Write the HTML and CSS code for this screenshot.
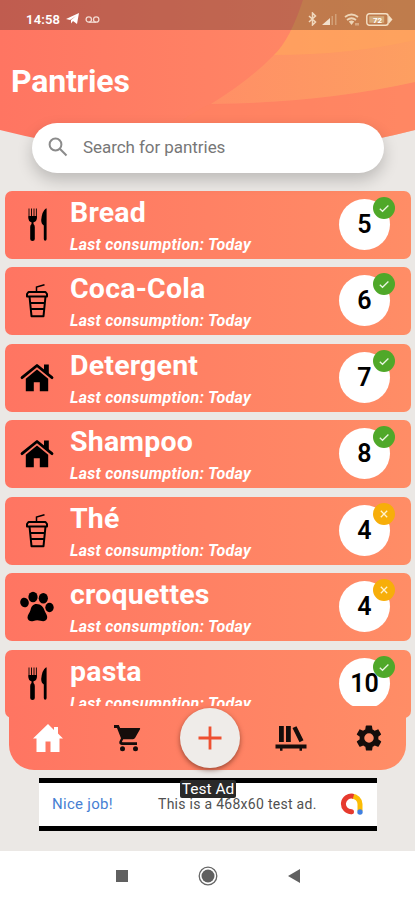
FILE: index.html
```html
<!DOCTYPE html>
<html lang="en">
<head>
    <meta charset="UTF-8">
    <meta name="viewport" content="width=device-width, initial-scale=1.0">
    <title>Pantries</title>
    <link rel="stylesheet" href="styles.css">
</head>
<body>
    <svg class="sprite" width="0" height="0">
        <symbol id="cutlery" viewBox="0 0 36 36">
            <path d="M10 1.500v10M12.500 1.500v10M15 1.500v10M17.400 1.500v10" stroke="#000" stroke-width=".9" fill="none"/>
            <path d="M9.500 9v2.500q0 3 3 3.800V17q-1.300 1-1.300 3v12q0 2 2.300 2t2.300-2V20q0-2-1.300-3v-1.700q3.300-.8 3.300-3.800V9z"/>
            <path d="M27.200 1.300Q23 4 22.200 13q0 4 2.600 5.500V32q0 1.800 1.400 1.800t1.400-1.800V2q0-.6-.4-.7z"/>
        </symbol>
        <symbol id="cup" viewBox="0 0 36 36">
            <path d="M17.500 8V4l8-2.200" stroke="#000" stroke-width="1.500" fill="none"/>
            <path d="M9.500 9h17l1.500 2v2.500H8V11z" stroke="#000" stroke-width="2" fill="none" stroke-linejoin="round"/>
            <path d="M10.500 13.500l2 19.700h12l2-19.700M11 20h15M12 26h13" stroke="#000" stroke-width="2" fill="none" stroke-linejoin="round"/>
        </symbol>
        <symbol id="house" viewBox="0 0 36 36">
            <path d="M3 17.700 18 5.500l15 12.200" stroke="#000" stroke-width="2.800" fill="none" stroke-linecap="round" stroke-linejoin="round"/>
            <path d="M25 4.500h4.800v11l-4.800-3.800zM18 9.500 6.800 18.700v12.500h8v-9h6v9h8.400V18.700z"/>
        </symbol>
        <symbol id="paw" viewBox="0 0 36 36">
            <ellipse cx="14" cy="8" rx="4.600" ry="5.200"/>
            <ellipse cx="24.300" cy="9.300" rx="4.600" ry="5.200"/>
            <ellipse cx="5.500" cy="13.500" rx="4.300" ry="4.800" transform="rotate(-15 5.500 13.500)"/>
            <ellipse cx="30.500" cy="18.500" rx="4.200" ry="4.700"/>
            <path d="M17.500 15C22 15 24.500 18 25.500 21.500C26.500 24.500 29 26.500 28 29.500C27 32.500 24 32.500 21.500 31.700C19 31 17 31 14.500 31.900C11.500 32.800 8.500 31.500 8.500 28.500C8.500 25.500 10.800 24 11.500 21C12.300 17.500 14 15 17.500 15Z"/>
        </symbol>
        <symbol id="check" viewBox="0 0 22 22">
            <circle cx="11" cy="11" r="11" fill="#4fa829"/>
            <path d="M6.800 11.700l2.700 2.600 5.900-5.800" fill="none" stroke="#e9f6e2" stroke-width="1.300"/>
        </symbol>
        <symbol id="cross" viewBox="0 0 22 22">
            <circle cx="11" cy="11" r="11" fill="#f7ae09"/>
            <path d="M7.800 7.800l6.400 6.400M14.200 7.800l-6.400 6.400" fill="none" stroke="#fff3d0" stroke-width="1.300"/>
        </symbol>
    </svg>

    <div class="phone">
        <header class="header">
            <svg class="header-bg" viewBox="0 0 415 190" preserveAspectRatio="none">
                <defs>
                    <linearGradient id="coral" x1="0" y1="0" x2="1" y2="0">
                        <stop offset="0" stop-color="#ff7562"/>
                        <stop offset="1" stop-color="#ff8d66"/>
                    </linearGradient>
                    <linearGradient id="wave" x1="0" y1="0" x2="1" y2="0">
                        <stop offset="0" stop-color="#ff8f66"/>
                        <stop offset="1" stop-color="#fd9f61"/>
                    </linearGradient>
                    <clipPath id="curve"><path d="M0 0H415V130Q208 183 0 130Z"/></clipPath>
                </defs>
                <g clip-path="url(#curve)">
                    <rect width="415" height="190" fill="url(#coral)"/>
                    <path d="M208 105Q320 103 415 82V190H100Q160 130 208 105Z" fill="#ff8260" opacity=".5"/>
                    <path d="M303 0Q290 40 274 55 250 80 211 104 320 103 415 82V0Z" fill="url(#wave)"/>
                    <path d="M303 0Q290 40 274 55 350 55 415 40V0Z" fill="#ffa45c" opacity=".65"/>
                </g>
            </svg>
            <div class="status-bar">
                <span class="time">14:58</span>
                <svg width="15" height="14" viewBox="0 0 15 14"><path d="M1 7 14 1l-2 11-4-3-2 2.500V8l5-4-6 4z" fill="#fff"/></svg>
                <svg class="voicemail" width="15" height="9" viewBox="0 0 15 9" fill="none" stroke="#f2d9d0" stroke-width="1.300"><circle cx="3.800" cy="4.500" r="2.700"/><circle cx="11.200" cy="4.500" r="2.700"/><path d="M3.800 7.200h7.400"/></svg>
                <div class="status-right">
                    <svg width="9" height="14" viewBox="0 0 9 14" fill="none" stroke="#f0d8bd" stroke-width="1.500"><path d="M1 4l6.500 6L4.500 13V1l3 3L1 10"/></svg>
                    <svg class="signal" width="17" height="12" viewBox="0 0 17 12"><path d="M1 12 9 5v7z" fill="#f2e0cd"/><path d="M10.500 12V3h1.500v9zM14 12V1h1.500v11z" fill="#d2a078"/></svg>
                    <svg class="wifi" width="15" height="13" viewBox="0 0 15 13" fill="none" stroke="#edd5b6" stroke-width="1.800"><path d="M1 4q6.500-5 13 0M3 7q4.500-3.500 9 0"/><path d="M4.800 8.500q2.700-2 5.400 0L7.500 12z" fill="#edd5b6" stroke="none"/><path d="M12 10v2.500M14 10v2.500" stroke-width="1"/></svg>
                    <svg width="27" height="13" viewBox="0 0 27 13"><rect x=".8" y=".8" width="21.400" height="11.400" rx="2.500" fill="none" stroke="#f4e0c5" stroke-width="1.400"/><path d="M23 2.500 26.500 6.500l-3.500 4z" fill="#f4e0c5"/><rect x="3.200" y="3.200" width="15" height="6.600" fill="#d3aa7b"/><text x="11.500" y="9.600" class="battery-text">72</text></svg>
                </div>
            </div>
            <h1>Pantries</h1>
            <div class="search">
                <svg width="20" height="20" viewBox="0 0 20 20" fill="none" stroke="#8b8b8b" stroke-width="2"><circle cx="7.500" cy="7.500" r="5.900"/><path d="M11.800 11.800 18.500 18.500"/></svg>
                <span>Search for pantries</span>
            </div>
        </header>

        <main class="list">
            <div class="card">
                <svg class="card-icon"><use href="#cutlery"/></svg>
                <div class="card-text"><h2>Bread</h2><p>Last consumption: Today</p></div>
                <div class="count">5<svg class="badge"><use href="#check"/></svg></div>
            </div>
            <div class="card">
                <svg class="card-icon"><use href="#cup"/></svg>
                <div class="card-text"><h2>Coca-Cola</h2><p>Last consumption: Today</p></div>
                <div class="count">6<svg class="badge"><use href="#check"/></svg></div>
            </div>
            <div class="card">
                <svg class="card-icon"><use href="#house"/></svg>
                <div class="card-text"><h2>Detergent</h2><p>Last consumption: Today</p></div>
                <div class="count">7<svg class="badge"><use href="#check"/></svg></div>
            </div>
            <div class="card">
                <svg class="card-icon"><use href="#house"/></svg>
                <div class="card-text"><h2>Shampoo</h2><p>Last consumption: Today</p></div>
                <div class="count">8<svg class="badge"><use href="#check"/></svg></div>
            </div>
            <div class="card">
                <svg class="card-icon"><use href="#cup"/></svg>
                <div class="card-text"><h2>Thé</h2><p>Last consumption: Today</p></div>
                <div class="count">4<svg class="badge"><use href="#cross"/></svg></div>
            </div>
            <div class="card">
                <svg class="card-icon"><use href="#paw"/></svg>
                <div class="card-text"><h2>croquettes</h2><p>Last consumption: Today</p></div>
                <div class="count">4<svg class="badge"><use href="#cross"/></svg></div>
            </div>
            <div class="card">
                <svg class="card-icon"><use href="#cutlery"/></svg>
                <div class="card-text"><h2>pasta</h2><p>Last consumption: Today</p></div>
                <div class="count">10<svg class="badge"><use href="#check"/></svg></div>
            </div>
        </main>

        <nav class="tabs">
            <div class="tab"><svg width="32" height="30" viewBox="0 0 32 30" fill="#fff"><path d="M16 1 1 15.500h3.500V29h9V18.500h5V29h9V15.500H31l-5-5V4h-4v3z"/></svg></div>
            <div class="tab"><svg width="28" height="28" viewBox="0 0 28 28" fill="#150d0b"><path d="M1 1h4.800l1.300 3H26.500q1 0 .5 1.200l-4.800 8.600q-.8 1.400-2.200 1.400H10.200L9 17.500q0 .7.600.7H24V21H8.700q-3-.5-2.300-3.500L8 14.200 4 4H1z"/><circle cx="9.500" cy="24.700" r="2.500"/><circle cx="22.500" cy="24.700" r="2.500"/></svg></div>
            <div class="tab"><div class="add"><svg width="26" height="26" viewBox="0 0 26 26" stroke="#ee5031" stroke-width="2.800"><path d="M13 1.500v23M1.500 13h23"/></svg></div></div>
            <div class="tab"><svg width="32" height="28" viewBox="0 0 32 28" fill="#150d0b"><path d="M4 2h4.800v16H4zM11 2h4.800v16H11zM17.500 4l4-1.800 7 14-4 2zM.5 20.500h31v4H27v2.200h-2.500v-2.200H7.500v2.200H5v-2.200H.5z"/></svg></div>
            <div class="tab"><svg width="30" height="30" viewBox="0 0 24 24" fill="#150d0b"><path fill-rule="evenodd" d="M19.400 13c0-.3.100-.6.100-1s0-.7-.1-1l2.100-1.600c.2-.2.200-.4.100-.6l-2-3.500c-.1-.2-.4-.3-.6-.2l-2.500 1c-.5-.4-1.100-.7-1.700-1l-.4-2.600c0-.3-.2-.5-.5-.5h-4c-.2 0-.4.200-.5.400L9 5.100c-.6.300-1.200.6-1.700 1l-2.400-1c-.2-.1-.5 0-.6.200l-2 3.400c-.1.200-.1.500.1.700L4.600 11c0 .3-.1.700-.1 1s0 .7.100 1l-2.200 1.600c-.2.200-.2.400-.1.600l2 3.500c.1.200.4.300.6.200l2.500-1c.5.400 1.100.7 1.700 1l.4 2.600c0 .3.200.5.500.5h4c.3 0 .5-.2.500-.5l.4-2.600c.6-.3 1.200-.6 1.700-1l2.500 1c.2.100.5 0 .6-.2l2-3.500c.1-.2.100-.4-.1-.6zM12 15.800a3.800 3.800 0 1 1 0-7.600 3.800 3.800 0 0 1 0 7.600z"/></svg></div>
        </nav>

        <div class="ad">
            <span class="ad-label">Test Ad</span>
            <span class="ad-link">Nice job!</span>
            <span class="ad-text">This is a 468x60 test ad.</span>
            <svg width="24" height="22" viewBox="0 0 24 22" fill="none" stroke-width="5"><path d="M12 3.200A7.900 7.900 0 0 1 20 11v7" stroke="#fbbc04"/><path d="M13.500 3.300A7.900 7.900 0 1 0 11.500 18.800" stroke="#e63a2e"/><circle cx="11.500" cy="18.700" r="2.500" fill="#e63a2e"/><circle cx="20" cy="19" r="2.700" fill="#4080e0"/></svg>
        </div>

        <footer class="system-nav">
            <svg width="14" height="14" viewBox="0 0 14 14"><path d="M1 1h12v12H1z" fill="#606060"/></svg>
            <svg width="20" height="20" viewBox="0 0 20 20"><circle cx="10" cy="10" r="8.800" fill="none" stroke="#666" stroke-width="1.300"/><circle cx="10" cy="10" r="6.500" fill="#606060"/></svg>
            <svg width="14" height="14" viewBox="0 0 14 14"><path d="M13 0v14L1 7z" fill="#606060"/></svg>
        </footer>
    </div>
</body>
</html>
```
FILE: styles.css
```css
* {
    margin: 0;
    padding: 0;
    box-sizing: border-box;
}

body {
    background-color: #ebe8e5;
    font-family: Roboto, "Liberation Sans", sans-serif;
}

svg {
    display: block;
    flex-shrink: 0;
}

.sprite {
    position: absolute;
}

.phone {
    display: flex;
    flex-direction: column;
    width: 415px;
    height: 900px;
    overflow: hidden;
}

.header {
    position: relative;
    height: 190px;
    flex-shrink: 0;
}

.header-bg {
    position: absolute;
    inset: 0;
    width: 100%;
    height: 100%;
    z-index: -1;
}

.status-bar {
    display: flex;
    align-items: center;
    height: 30px;
    padding: 8px 22px 0 26px;
    background-color: rgba(45, 35, 35, 0.3);
    color: #fff;
}

.time {
    width: 35px;
    margin-right: 4px;
    font-size: 13px;
    font-weight: 600;
    letter-spacing: 0.2px;
}

.voicemail {
    margin-left: 5px;
}

.status-right {
    display: flex;
    align-items: center;
    margin-left: auto;
}

.signal {
    margin-left: 4px;
}

.wifi {
    margin: 0 7px 0 6px;
}

.battery-text {
    font-size: 8px;
    font-weight: 700;
    text-anchor: middle;
    fill: #fff;
}

h1 {
    padding: 31px 0 0 11px;
    height: 93px;
    line-height: 40px;
    font-size: 32px;
    font-weight: 700;
    letter-spacing: -0.2px;
    color: #fff;
}

.search {
    display: flex;
    align-items: center;
    gap: 15px;
    width: 352px;
    height: 50px;
    margin-left: 32px;
    padding: 0 16px 2px;
    border-radius: 25px;
    background-color: #fff;
    box-shadow: 0 7px 16px rgba(0, 0, 0, 0.2);
    font-size: 17px;
    letter-spacing: -0.06px;
    color: #777;
}

.list {
    display: flex;
    flex-direction: column;
    gap: 8.500px;
    height: 530px;
    padding: 0.500px 4px 0 5px;
    flex-shrink: 0;
    overflow: hidden;
}

.card {
    display: flex;
    height: 68px;
    flex-shrink: 0;
    padding: 0 20px 0 14px;
    border-radius: 7px;
    background: linear-gradient(90deg, #ff7562, #ff8d66);
}

.card-icon {
    width: 36px;
    height: 36px;
    margin-top: 16px;
}

.card-text {
    flex: 1;
    padding-left: 15px;
    color: #fff;
}

h2 {
    margin-top: 4px;
    line-height: 36px;
    font-size: 28.500px;
    font-weight: 700;
    letter-spacing: 0.2px;
}

.card-text p {
    margin-top: 4px;
    line-height: 20px;
    font-size: 16px;
    font-weight: 700;
    font-style: italic;
    letter-spacing: 0.27px;
}

.count {
    position: relative;
    width: 51px;
    height: 51px;
    margin-top: 8px;
    margin-right: 1px;
    border-radius: 50%;
    background-color: #fff;
    line-height: 51px;
    text-align: center;
    font-size: 25px;
    font-weight: 600;
    color: #000;
}

.badge {
    position: absolute;
    top: -2px;
    right: -5px;
    width: 22px;
    height: 22px;
}

.tabs {
    position: relative;
    display: grid;
    grid-template-columns: 78px 80px 84px 80px 76px;
    height: 64px;
    flex-shrink: 0;
    margin: -14px 9px 0;
    border-radius: 0 0 25px 25px;
    background: linear-gradient(90deg, #ff7562, #ff8d66);
}

.tab {
    display: flex;
    justify-content: center;
    align-items: center;
}

.add {
    display: flex;
    justify-content: center;
    align-items: center;
    width: 60px;
    height: 60px;
    margin-left: 2px;
    border-radius: 50%;
    background-color: #efece9;
    box-shadow: 0 2px 5px rgba(90, 35, 20, 0.6);
}

.ad {
    position: relative;
    display: flex;
    align-items: center;
    width: 338px;
    height: 53px;
    flex-shrink: 0;
    margin: 8px 0 0 39px;
    padding: 0 13px 2px;
    border-top: 5px solid #000;
    border-bottom: 5px solid #000;
    background-color: #fff;
    font-size: 14px;
    letter-spacing: 0.28px;
}

.ad-label {
    position: absolute;
    top: -3px;
    left: 141px;
    width: 56px;
    height: 18px;
    border-radius: 2px;
    background-color: #292929;
    line-height: 18px;
    text-align: center;
    font-size: 15.500px;
    letter-spacing: 0;
    color: #fff;
}

.ad-link {
    width: 106px;
    font-size: 15px;
    color: #477fd3;
}

.ad-text {
    flex: 1;
    color: #505050;
    white-space: nowrap;
}

.system-nav {
    display: flex;
    justify-content: center;
    align-items: center;
    gap: 69px;
    flex: 1;
    margin-top: 20px;
    background-color: #fff;
}
```
